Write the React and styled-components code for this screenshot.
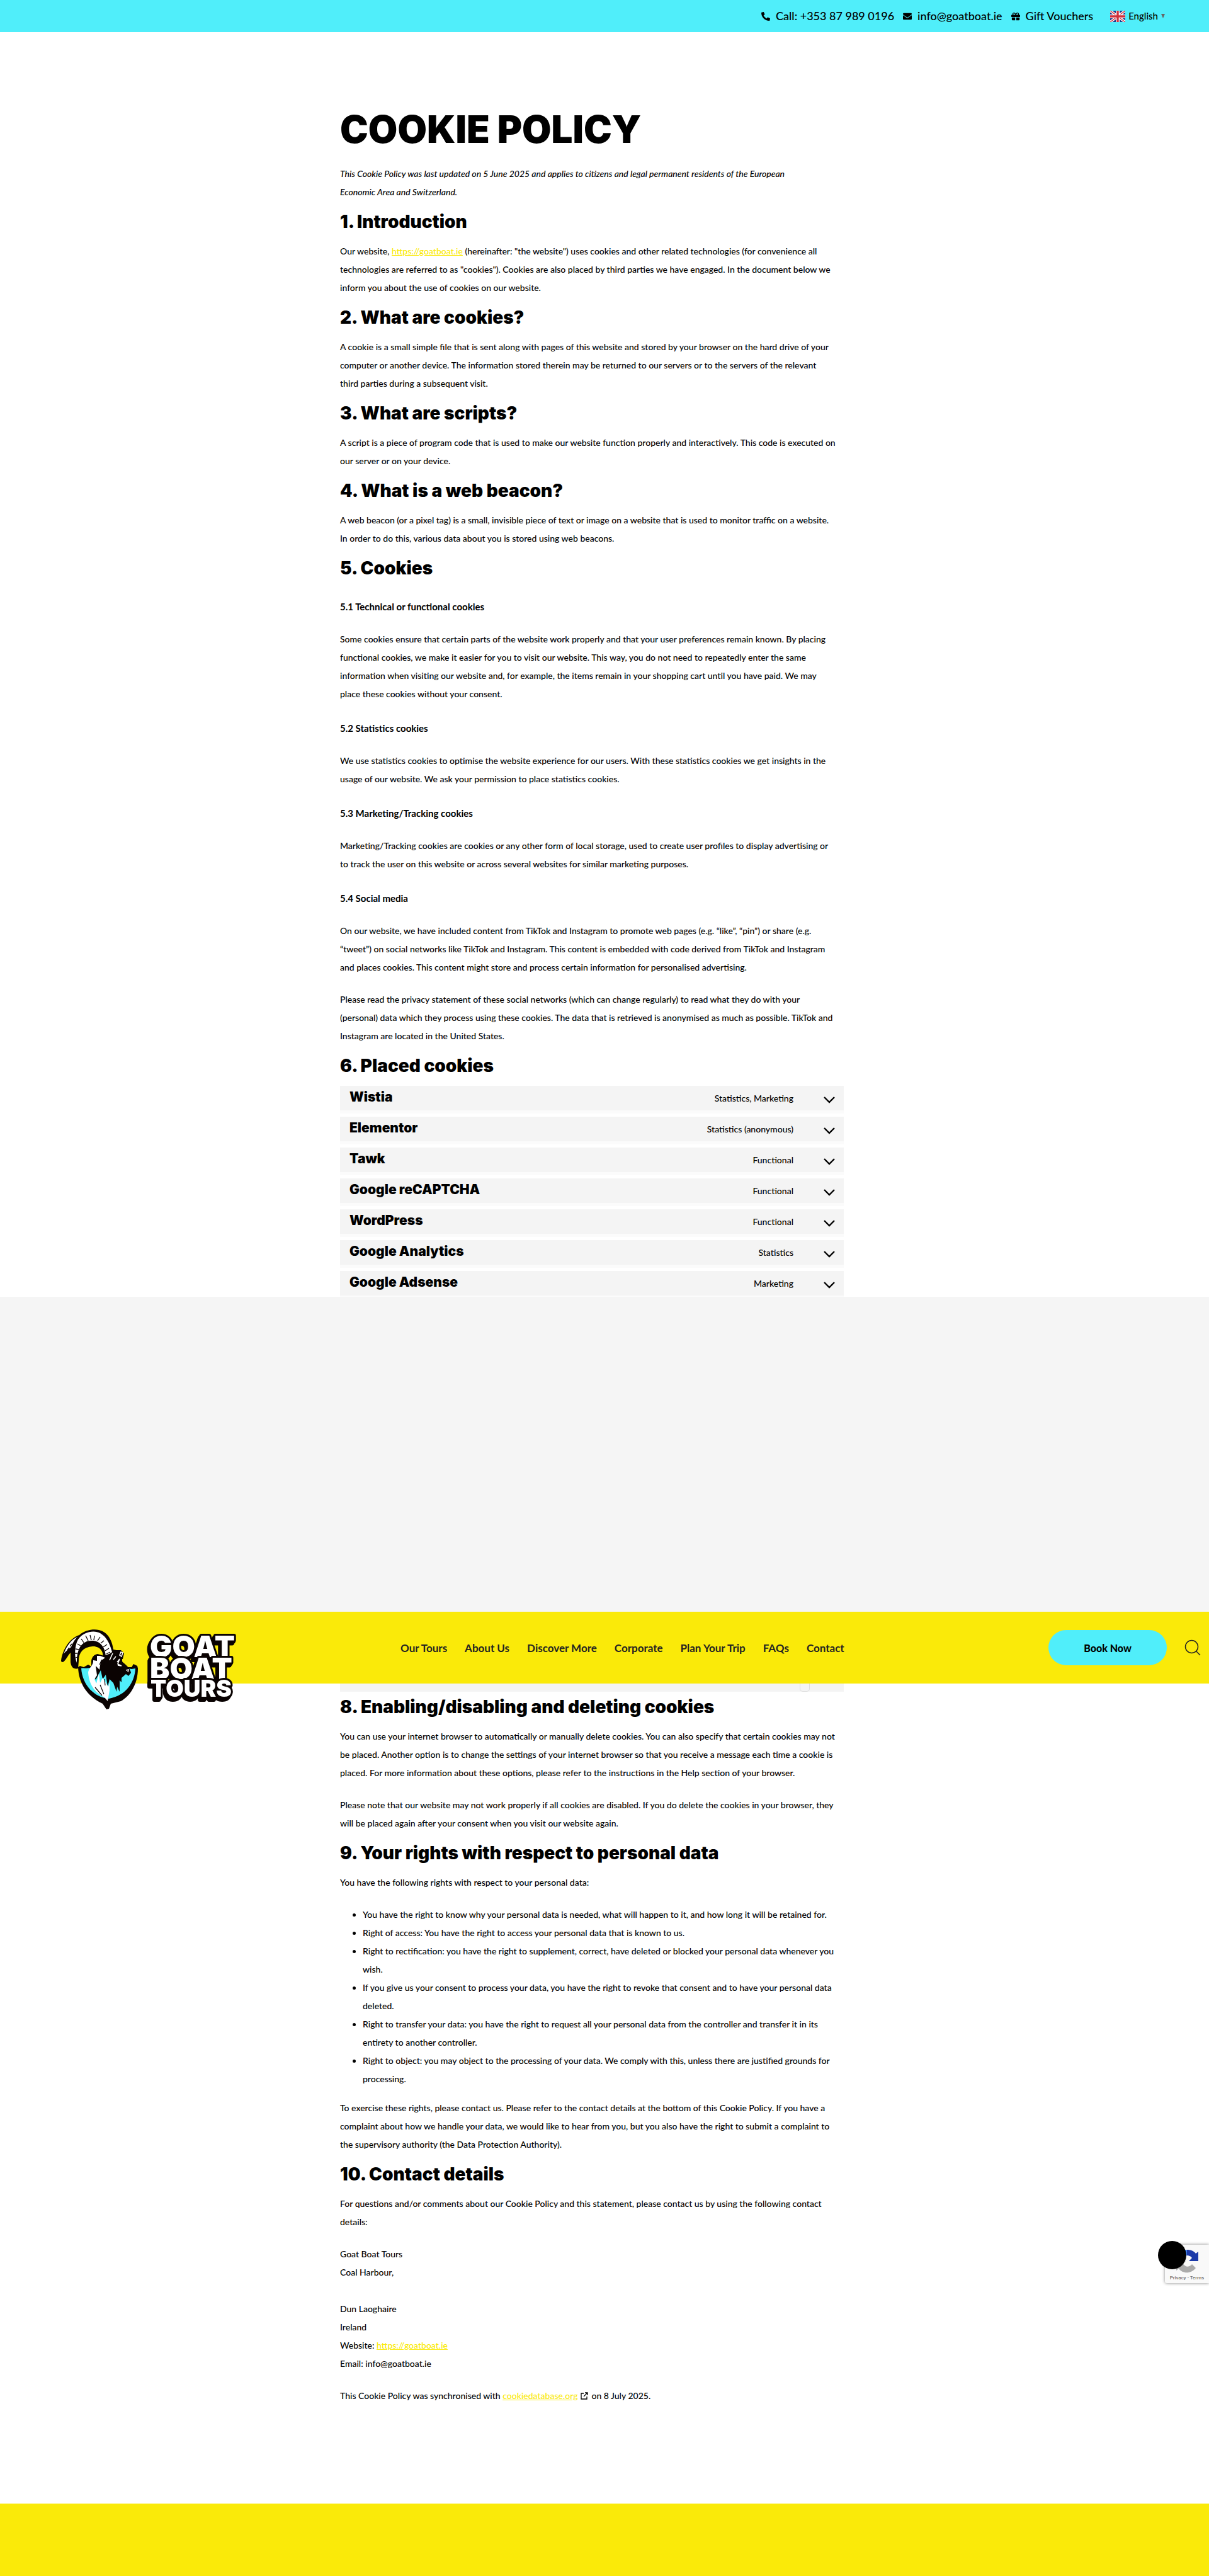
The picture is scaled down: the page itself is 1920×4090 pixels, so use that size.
import React from 'react';
import styled, { createGlobalStyle } from 'styled-components';
import { FaPhoneAlt, FaEnvelope, FaGift } from 'react-icons/fa';

const YELLOW = '#faea09';
const CYAN = '#50eefa';

const GlobalStyle = createGlobalStyle`
  * { box-sizing: border-box; }
  body {
    margin: 0;
    background: #fff;
    color: #000;
    font-family: Lato, "Liberation Sans", sans-serif;
    font-size: 14px;
    font-weight: 500;
    line-height: 29px;
  }
`;

const Page = styled.div`
  position: relative;
  overflow-x: hidden;
`;

const TopBar = styled.div`
  display: flex;
  align-items: center;
  justify-content: flex-end;
  gap: 14px;
  height: 51px;
  padding-right: 70px;
  background: ${CYAN};
`;

const TopLink = styled.a`
  display: flex;
  align-items: center;
  gap: 9px;
  color: #000;
  font-size: 18px;
  text-decoration: none;
  svg { width: 14px; height: 14px; }
`;

const Language = styled.button`
  display: flex;
  align-items: center;
  gap: 5px;
  margin-left: 13px;
  padding: 0;
  border: 0;
  background: none;
  color: #000;
  font: inherit;
  font-size: 15px;
  cursor: pointer;
`;

const Caret = styled.span`
  width: 0;
  border: 3px solid transparent;
  border-top: 7px solid #666;
  border-bottom: 0;
`;

const Content = styled.div`
  display: flex;
  justify-content: center;
  padding-right: 40px;
`;

const Column = styled.main`
  width: 100%;
  max-width: 800px;
`;

const Title = styled.h1`
  margin: 0;
  padding-top: 124px;
  font-family: Inter, sans-serif;
  font-size: 60px;
  font-weight: 900;
  line-height: 60px;
`;

const Section = styled.section`
  margin-top: 22px;
  &:first-of-type { margin-top: 26px; }
`;

const Heading = styled.h2`
  margin: 0 0 21px;
  font-family: Inter, sans-serif;
  font-size: 28px;
  font-weight: 900;
  line-height: 22px;
  & + h3 { margin-top: 36px; }
`;

const SubHeading = styled.h3`
  margin: 26px 0 22px;
  font-size: 15px;
  font-weight: 700;
  line-height: 29px;
`;

const Text = styled.p`
  margin: 0 0 22px;
  white-space: nowrap;
  font-style: ${(p) => (p.$italic ? 'italic' : 'normal')};
  @media (max-width: 860px) { white-space: normal; }
`;

const Bullets = styled.ul`
  margin: 0 0 17px;
  padding-left: 36px;
  white-space: nowrap;
  @media (max-width: 860px) { white-space: normal; }
`;

const Anchor = styled.a`
  color: ${YELLOW};
  text-decoration: underline;
`;

const Services = styled.div`
  display: flex;
  flex-direction: column;
  gap: 5px;
`;

const Service = styled.button`
  display: grid;
  grid-template-columns: 1fr auto 18px;
  align-items: center;
  column-gap: 48px;
  width: 100%;
  height: 44px;
  padding: 0 14px 0 15px;
  border: 0;
  border-bottom: 5px solid #fbfbfb;
  background: #f4f4f4;
  background-clip: padding-box;
  color: #000;
  font: inherit;
  text-align: left;
  cursor: pointer;
  &:last-child { height: 41px; border-bottom-width: 2px; }
`;

const ServiceName = styled.span`
  font-family: Inter, sans-serif;
  font-size: 21px;
  font-weight: 900;
  line-height: 36px;
  align-self: start;
`;

const Chevron = styled.svg`
  width: 18px;
  height: 11px;
  margin-top: 5px;
`;

const Band = styled.div`
  height: 500px;
  background: #f5f5f5;
`;

const Header = styled.header`
  display: flex;
  align-items: center;
  height: 114px;
  padding: 0 13px 0 96px;
  background: ${YELLOW};
`;

const LogoLink = styled.a`
  align-self: flex-start;
  flex: none;
  width: 540px;
  height: 114px;
  padding-top: 28px;
  svg { display: block; overflow: visible; }
`;

const Lettering = styled.g`
  filter: drop-shadow(-2px 3px 0 #0a0302) drop-shadow(-1px 2px 0 #0a0302);
`;

const Wordmark = styled.text`
  font-family: Inter, sans-serif;
  font-size: ${(p) => p.$size}px;
  font-weight: 900;
  fill: #fff;
  stroke: #0a0302;
  stroke-width: 6px;
  stroke-linejoin: round;
  paint-order: stroke;
`;

const Nav = styled.nav`
  display: flex;
  gap: 28px;
  a {
    color: #222;
    font-size: 17px;
    font-weight: 700;
    text-decoration: none;
    white-space: nowrap;
  }
`;

const BookButton = styled.button`
  width: 188px;
  height: 56px;
  margin-left: auto;
  border: 0;
  border-radius: 28px;
  background: ${CYAN};
  color: #000;
  font: inherit;
  font-size: 16px;
  font-weight: 900;
  cursor: pointer;
`;

const SearchButton = styled.button`
  display: flex;
  margin-left: 28px;
  padding: 0;
  border: 0;
  background: none;
  cursor: pointer;
`;

const TableTail = styled.div`
  display: flex;
  justify-content: flex-end;
  height: 13px;
  margin-bottom: 13px;
  padding-right: 54px;
  background: #f4f4f4;
`;

const ToggleEnd = styled.span`
  width: 16px;
  height: 13px;
  border: 1px solid #ddd;
  border-top: 0;
  border-radius: 0 0 5px 5px;
`;

const External = styled.svg`
  width: 12px;
  height: 12px;
  margin: 0 5px;
  vertical-align: -1px;
`;

const Footer = styled.footer`
  height: 115px;
  margin-top: 135px;
  background: ${YELLOW};
`;

const Captcha = styled.aside`
  position: absolute;
  top: 3564px;
  right: 0;
  display: flex;
  flex-direction: column;
  align-items: center;
  width: 70px;
  height: 61px;
  padding-top: 6px;
  border-radius: 3px 0 0 3px;
  background: #f9f9f9;
  box-shadow: 0 0 5px #888;
  color: #555;
  font-family: Roboto, sans-serif;
  font-size: 8px;
  font-weight: 400;
  line-height: 14px;
`;

const ChatButton = styled.button`
  position: absolute;
  top: -6px;
  left: -11px;
  width: 45px;
  height: 45px;
  padding: 0;
  border: 0;
  border-radius: 50%;
  background: #000;
`;

const services = [
  ['Wistia', 'Statistics, Marketing'],
  ['Elementor', 'Statistics (anonymous)'],
  ['Tawk', 'Functional'],
  ['Google reCAPTCHA', 'Functional'],
  ['WordPress', 'Functional'],
  ['Google Analytics', 'Statistics'],
  ['Google Adsense', 'Marketing'],
];

const menu = ['Our Tours', 'About Us', 'Discover More', 'Corporate', 'Plan Your Trip', 'FAQs', 'Contact'];

function Lines({ of }) {
  return of.map((line, i) => (
    <React.Fragment key={i}>
      {i > 0 && <br />}
      {line}
    </React.Fragment>
  ));
}

function Flag() {
  return (
    <svg width="24" height="18" viewBox="0 0 24 18" aria-hidden="true">
      <rect width="24" height="18" fill="#1c3a8c" />
      <path d="M0 0L24 18M24 0L0 18" stroke="#fff" strokeWidth="4" />
      <path d="M0 0L24 18M24 0L0 18" stroke="#d0313c" strokeWidth="1.4" />
      <path d="M12 0V18M0 9H24" stroke="#fff" strokeWidth="6" />
      <path d="M12 0V18M0 9H24" stroke="#d0313c" strokeWidth="3.4" />
    </svg>
  );
}

function Logo() {
  return (
    <svg width="285" height="128" viewBox="0 0 285 128" role="img" aria-label="Goat Boat Tours">
      {/* shield */}
      <path d="M31 58 L37 60 L44 56 L51 60 L103 60 L113 60 L116 55 L122 58 L123 62 C123 88 110 106 96 114 L80 118 L77 126 L73 127 L67 118 C42 106 29 86 28 60Z" fill="#0a0302" />
      <path d="M33 62 C35 60 45 64 50 59 L107 62 L113 63 L119 62 C118 83 105 105 77 110 C54 108 35 89 33 62Z" fill={CYAN} />
      {/* horns */}
      <path d="M1 50 C3 33 14 14 30 9 C39 1 52 -1 61 1 C75 4 82 17 84 32 L89 33 L96 33 L101 38 L99 47 L66 47 C71 35 61 26 51 27 C36 28 29 37 29 50 L28 62 C21 64 17 60 16 52 L16 37 C11 42 9 49 4 52 C2 52 1 51 1 50Z" fill="#0a0302" />
      <path d="M5 39 C11 24 18 16 27 12 C21 18 19 23 17 28 C12 32 9 34 5 39Z" fill="#fff" />
      <path d="M26 53 C22 43 22 27 28 16 C37 3 54 1 63 6 C73 12 78 21 82 36 L72 43 C71 28 63 18 50 18 C33 18 26 31 26 53Z" fill="#fff" />
      <path d="M40 10L44 18M47 9L49 17M54 10L53 17M63 12L59 18M69 18L64 22M74 24L68 28M77 30L71 34M79 36L73 39M33 15L37 21M27 23L32 26M24 31L29 32M23 38L27 38M24 45L27 44M11 33L14 29M15 27L18 23" stroke="#0a0302" strokeWidth="1.3" fill="none" />
      {/* head and mane */}
      <path d="M49 50 C50 43 54 40 59 39 L69 42 L80 38 L92 38 L98 44 L98 51 C103 56 111 61 112 69 L108 74 L104 71 L97 77 L97 84 L94 81 L94 99 L90 91 L89 99 L84 85 L78 79 L75 91 L72 72 L67 79 L64 65 L56 80 L49 67Z" fill="#0a0302" />
      <path d="M44 69 C44 62 53 57 52 49 L58 50 L58 42 L63 42 L71 45 L64 50 L62 64 L56 58 L58 73 L54 79 L57 86 L61 70 L63 85 L67 77 L76 91 L78 84 L78 97 L75 114 L70 108 C57 101 46 91 44 69Z" fill="#fff" />
      <path d="M80 44L83 38L78 49M84 48L88 43M90 52L94 47L91 55L97 58L91 57M104 65L108 64L107 68M96 36L99 37L97 43L94 41Z" stroke="#fff" strokeWidth="1.5" fill="none" />
      <path d="M66 48L62 56M71 50L67 59M63 88L69 103M55 92L66 105M70 79L71 89" stroke="#0a0302" strokeWidth="1.2" />
      <Lettering>
        <Wordmark $size={47} x="142" y="44">GOAT</Wordmark>
        <Wordmark $size={47} x="142" y="79">BOAT</Wordmark>
        <Wordmark $size={37} x="143" y="107">TOURS</Wordmark>
      </Lettering>
    </svg>
  );
}

export default function App() {
  return (
    <Page>
      <GlobalStyle />
      <TopBar>
        <TopLink href="tel:+353879890196"><FaPhoneAlt />Call: +353 87 989 0196</TopLink>
        <TopLink href="mailto:info@goatboat.ie"><FaEnvelope />info@goatboat.ie</TopLink>
        <TopLink href="#vouchers"><FaGift />Gift Vouchers</TopLink>
        <Language type="button"><Flag />English<Caret /></Language>
      </TopBar>

      <Content>
        <Column>
          <Title>COOKIE POLICY</Title>
          <Section>
            <Text $italic>
              <Lines of={[
                'This Cookie Policy was last updated on 5 June 2025 and applies to citizens and legal permanent residents of the European',
                'Economic Area and Switzerland.',
              ]} />
            </Text>
          </Section>
          <Section>
            <Heading>1. Introduction</Heading>
            <Text>
              Our website, <Anchor href="https://goatboat.ie">https://goatboat.ie</Anchor> (hereinafter: "the website") uses cookies and other related technologies (for convenience all<br />
              <Lines of={[
                'technologies are referred to as "cookies"). Cookies are also placed by third parties we have engaged. In the document below we',
                'inform you about the use of cookies on our website.',
              ]} />
            </Text>
          </Section>
          <Section>
            <Heading>2. What are cookies?</Heading>
            <Text>
              <Lines of={[
                'A cookie is a small simple file that is sent along with pages of this website and stored by your browser on the hard drive of your',
                'computer or another device. The information stored therein may be returned to our servers or to the servers of the relevant',
                'third parties during a subsequent visit.',
              ]} />
            </Text>
          </Section>
          <Section>
            <Heading>3. What are scripts?</Heading>
            <Text>
              <Lines of={[
                'A script is a piece of program code that is used to make our website function properly and interactively. This code is executed on',
                'our server or on your device.',
              ]} />
            </Text>
          </Section>
          <Section>
            <Heading>4. What is a web beacon?</Heading>
            <Text>
              <Lines of={[
                'A web beacon (or a pixel tag) is a small, invisible piece of text or image on a website that is used to monitor traffic on a website.',
                'In order to do this, various data about you is stored using web beacons.',
              ]} />
            </Text>
          </Section>
          <Section>
            <Heading>5. Cookies</Heading>
            <SubHeading>5.1 Technical or functional cookies</SubHeading>
            <Text>
              <Lines of={[
                'Some cookies ensure that certain parts of the website work properly and that your user preferences remain known. By placing',
                'functional cookies, we make it easier for you to visit our website. This way, you do not need to repeatedly enter the same',
                'information when visiting our website and, for example, the items remain in your shopping cart until you have paid. We may',
                'place these cookies without your consent.',
              ]} />
            </Text>
            <SubHeading>5.2 Statistics cookies</SubHeading>
            <Text>
              <Lines of={[
                'We use statistics cookies to optimise the website experience for our users. With these statistics cookies we get insights in the',
                'usage of our website. We ask your permission to place statistics cookies.',
              ]} />
            </Text>
            <SubHeading>5.3 Marketing/Tracking cookies</SubHeading>
            <Text>
              <Lines of={[
                'Marketing/Tracking cookies are cookies or any other form of local storage, used to create user profiles to display advertising or',
                'to track the user on this website or across several websites for similar marketing purposes.',
              ]} />
            </Text>
            <SubHeading>5.4 Social media</SubHeading>
            <Text>
              <Lines of={[
                'On our website, we have included content from TikTok and Instagram to promote web pages (e.g. “like”, “pin”) or share (e.g.',
                '“tweet”) on social networks like TikTok and Instagram. This content is embedded with code derived from TikTok and Instagram',
                'and places cookies. This content might store and process certain information for personalised advertising.',
              ]} />
            </Text>
            <Text>
              <Lines of={[
                'Please read the privacy statement of these social networks (which can change regularly) to read what they do with your',
                '(personal) data which they process using these cookies. The data that is retrieved is anonymised as much as possible. TikTok and',
                'Instagram are located in the United States.',
              ]} />
            </Text>
          </Section>
          <Section>
            <Heading>6. Placed cookies</Heading>
            <Services>
              {services.map(([name, purpose]) => (
                <Service type="button" key={name}>
                  <ServiceName>{name}</ServiceName>
                  <span>{purpose}</span>
                  <Chevron viewBox="0 0 18 11" aria-hidden="true">
                    <path d="M1 1L9 9L17 1" fill="none" stroke="#000" strokeWidth="2.4" />
                  </Chevron>
                </Service>
              ))}
            </Services>
          </Section>
        </Column>
      </Content>

      <Band />
      <Header>
        <LogoLink href="#home"><Logo /></LogoLink>
        <Nav>
          {menu.map((item) => <a href="#menu" key={item}>{item}</a>)}
        </Nav>
        <BookButton type="button">Book Now</BookButton>
        <SearchButton type="button" aria-label="Search">
          <svg width="26" height="26" viewBox="0 0 26 26" fill="none" stroke="#222" strokeWidth="1.5">
            <circle cx="11.5" cy="11.5" r="10" />
            <path d="M18.500 18.500L25 25" />
          </svg>
        </SearchButton>
      </Header>

      <Content>
        <Column as="div">
          <TableTail><ToggleEnd /></TableTail>
          <Heading>8. Enabling/disabling and deleting cookies</Heading>
          <Text>
            <Lines of={[
              'You can use your internet browser to automatically or manually delete cookies. You can also specify that certain cookies may not',
              'be placed. Another option is to change the settings of your internet browser so that you receive a message each time a cookie is',
              'placed. For more information about these options, please refer to the instructions in the Help section of your browser.',
            ]} />
          </Text>
          <Text>
            <Lines of={[
              'Please note that our website may not work properly if all cookies are disabled. If you do delete the cookies in your browser, they',
              'will be placed again after your consent when you visit our website again.',
            ]} />
          </Text>
          <Heading>9. Your rights with respect to personal data</Heading>
          <Text>You have the following rights with respect to your personal data:</Text>
          <Bullets>
            <li>You have the right to know why your personal data is needed, what will happen to it, and how long it will be retained for.</li>
            <li>Right of access: You have the right to access your personal data that is known to us.</li>
            <li>
              <Lines of={['Right to rectification: you have the right to supplement, correct, have deleted or blocked your personal data whenever you', 'wish.']} />
            </li>
            <li>
              <Lines of={['If you give us your consent to process your data, you have the right to revoke that consent and to have your personal data', 'deleted.']} />
            </li>
            <li>
              <Lines of={['Right to transfer your data: you have the right to request all your personal data from the controller and transfer it in its', 'entirety to another controller.']} />
            </li>
            <li>
              <Lines of={['Right to object: you may object to the processing of your data. We comply with this, unless there are justified grounds for', 'processing.']} />
            </li>
          </Bullets>
          <Text>
            <Lines of={[
              'To exercise these rights, please contact us. Please refer to the contact details at the bottom of this Cookie Policy. If you have a',
              'complaint about how we handle your data, we would like to hear from you, but you also have the right to submit a complaint to',
              'the supervisory authority (the Data Protection Authority).',
            ]} />
          </Text>
          <Heading>10. Contact details</Heading>
          <Text>
            <Lines of={[
              'For questions and/or comments about our Cookie Policy and this statement, please contact us by using the following contact',
              'details:',
            ]} />
          </Text>
          <Text>
            <Lines of={['Goat Boat Tours', 'Coal Harbour,', '', 'Dun Laoghaire', 'Ireland']} /><br />
            Website: <Anchor href="https://goatboat.ie">https://goatboat.ie</Anchor><br />
            Email: info@goatboat.ie
          </Text>
          <Text>
            This Cookie Policy was synchronised with <Anchor href="https://cookiedatabase.org">cookiedatabase.org</Anchor>
            <External viewBox="0 0 12 12" fill="none" stroke="#000" strokeWidth="1.3" aria-hidden="true">
              <path d="M5 2H1V11H10V7M7 1H11V5M11 1L5 7" />
            </External>
            on 8 July 2025.
          </Text>
        </Column>
      </Content>

      <Footer />

      <Captcha>
        <ChatButton type="button" aria-label="Open chat" />
        <svg width="40" height="40" viewBox="0 0 40 40" aria-hidden="true">
          <path d="M20 2C26 2 31 4 34 8L38 5V20H23L28 15C26 12 23 11 20 11Z" fill="#1c3aa9" />
          <path d="M20 2V11C15 12 12 15 12 20H3C3 9 10 2 20 2Z" fill="#4285f4" />
          <path d="M3 20L18 20L14 24C18 31 25 29 28 25L34 31C26 41 13 40 7 32L3 35Z" fill="#ababab" />
        </svg>
        Privacy - Terms
      </Captcha>
    </Page>
  );
}
